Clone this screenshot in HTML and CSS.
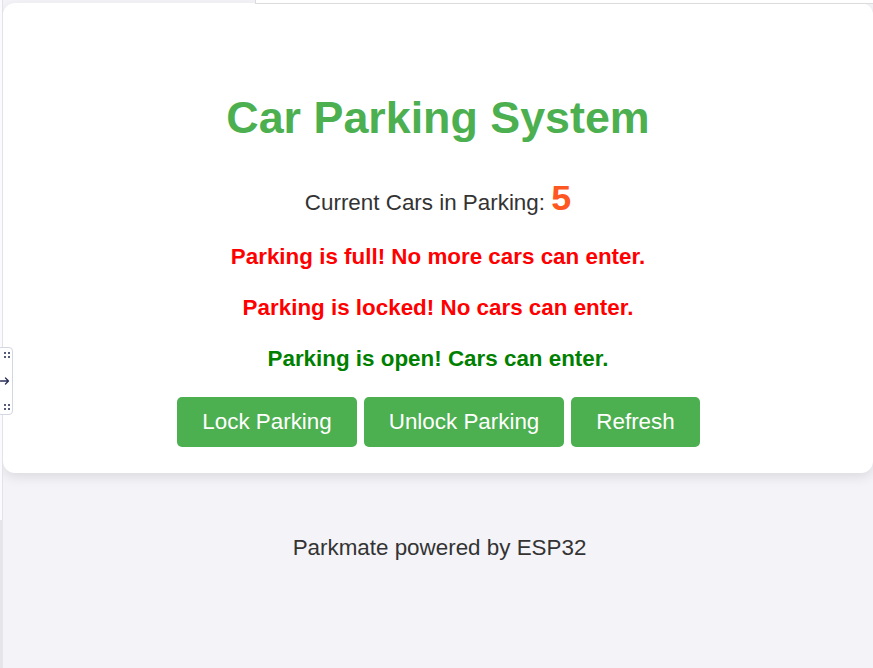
FILE: index.html
```html
<!DOCTYPE html>
<html lang="en">
<head>
<meta charset="utf-8">
<title>Car Parking System</title>
<link rel="stylesheet" href="styles.css">
</head>
<body>
  <div class="edge-strip"></div>
  <div class="edge-strip-low"></div>
  <div class="top-frame"></div>
  <main class="page">
    <section class="container">
      <h1 class="title">Car Parking System</h1>
      <p class="count">Current Cars in Parking: <span class="count-num">5</span></p>
      <p class="status status-full">Parking is full! No more cars can enter.</p>
      <p class="status status-locked">Parking is locked! No cars can enter.</p>
      <p class="status status-open">Parking is open! Cars can enter.</p>
      <div class="actions">
        <button class="btn">Lock Parking</button>
        <button class="btn">Unlock Parking</button>
        <button class="btn">Refresh</button>
      </div>
    </section>
    <footer class="footer">Parkmate powered by ESP32</footer>
  </main>
  <div class="side-handle">
    <span class="dots"><i></i><i></i><i></i><i></i></span>
    <svg class="arrow" width="10" height="8" viewBox="0 0 10 8"><path d="M0.5 4H8.5M5.5 1L8.5 4L5.5 7" fill="none" stroke="#2b2f5a" stroke-width="1.3" stroke-linecap="round" stroke-linejoin="round"/></svg>
    <span class="dots"><i></i><i></i><i></i><i></i></span>
  </div>
</body>
</html>
```
FILE: styles.css
```css
html, body {
  margin: 0;
  padding: 0;
}
body {
  background: #f4f4f8;
  font-family: "Liberation Sans", Arial, sans-serif;
  color: #333;
  min-height: 668px;
  overflow: hidden;
}
.page {
  padding: 3px 0 0 3px;
}
.container {
  width: 870px;
  box-sizing: border-box;
  background: #fff;
  border-radius: 12px;
  box-shadow: 0 4px 12px rgba(0, 0, 0, 0.1);
  text-align: center;
  padding: 59px 0 26px;
}
.title {
  color: #4caf50;
  font-size: 44.8px;
  font-weight: bold;
  margin: 30px 0;
}
.count {
  font-size: 22.4px;
  margin: 35px 0 25px;
}
.count-num {
  font-size: 1.6em;
  font-weight: bold;
  color: #ff5722;
}
.status {
  font-size: 22.4px;
  font-weight: bold;
  margin: 25px 0;
}
.status-full, .status-locked { color: #ff0000; }
.status-open { color: #008000; }
.actions {
  display: flex;
  justify-content: center;
  gap: 7px;
  padding-left: 1px;
}
.btn {
  background: #4caf50;
  color: #fff;
  border: none;
  border-radius: 5px;
  font-family: inherit;
  font-size: 22.4px;
  padding: 12px 25px;
  line-height: normal;
  cursor: pointer;
}
.footer {
  text-align: center;
  font-size: 22.4px;
  margin-top: 62px;
  padding-left: 3px;
}
.edge-strip {
  position: absolute;
  left: 0;
  top: 0;
  width: 2px;
  height: 520px;
  background: #fbfbfd;
  border-right: 1px solid #e2e2e8;
}
.edge-strip-low {
  position: absolute;
  left: 0;
  top: 520px;
  width: 3px;
  bottom: 0;
  background: #e6e6ea;
}
.top-frame {
  position: absolute;
  left: 255px;
  right: 0;
  top: 0;
  height: 4px;
  border-left: 1px solid #dcdcdc;
  border-bottom: 1px solid #dcdcdc;
  background: #fff;
  box-sizing: border-box;
}
.side-handle {
  position: absolute;
  left: -3px;
  top: 347px;
  width: 16px;
  height: 68px;
  box-sizing: border-box;
  background: #fff;
  border: 1px solid #d3d7e3;
  border-radius: 4px;
  display: flex;
  flex-direction: column;
  align-items: flex-end;
  justify-content: space-between;
  padding: 4px 2px 4px 0;
}
.dots {
  display: grid;
  grid-template-columns: 2px 2px;
  gap: 2px;
}
.dots i {
  width: 2px;
  height: 2px;
  background: #555a78;
}
.arrow {
  display: block;
}
```
